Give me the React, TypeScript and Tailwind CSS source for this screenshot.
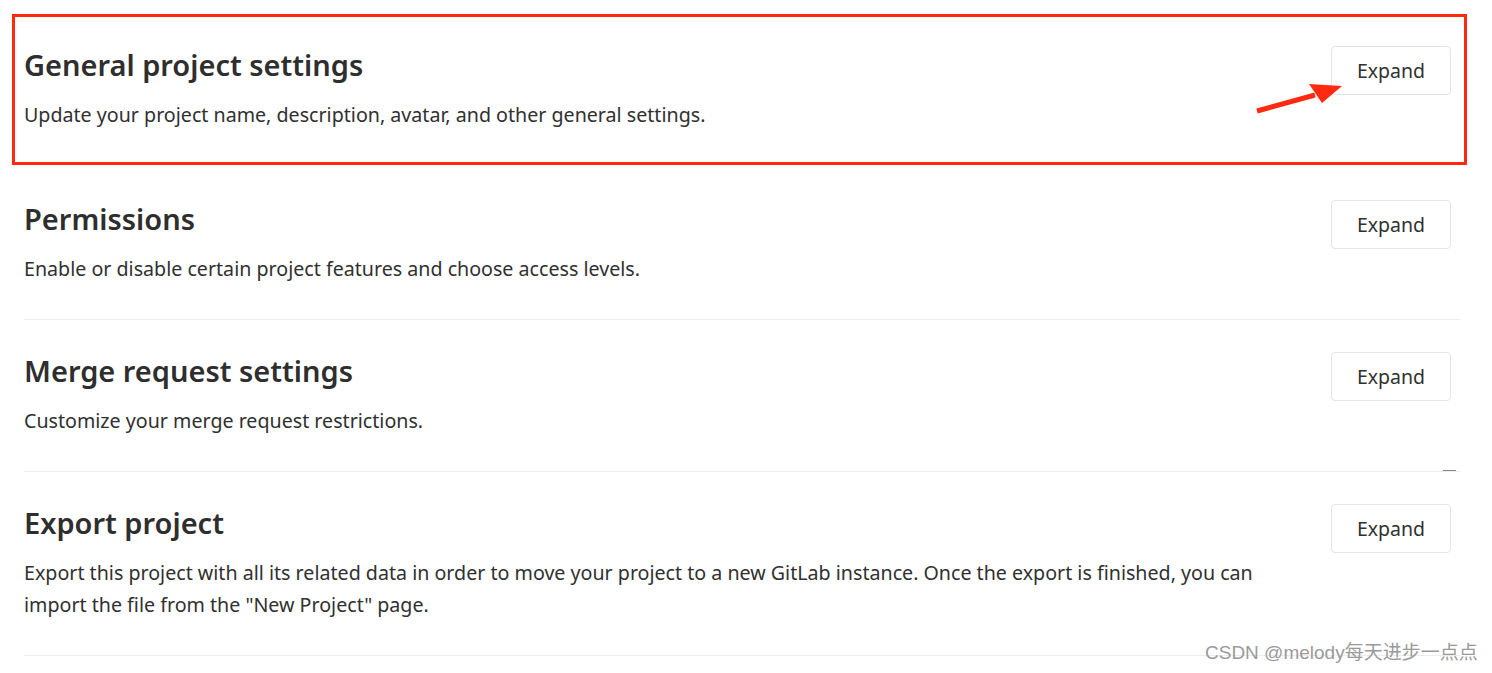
import React from 'react';

type Section = {
  title: string;
  description: string;
};

const SECTIONS: Section[] = [
  {
    title: 'General project settings',
    description: 'Update your project name, description, avatar, and other general settings.',
  },
  {
    title: 'Permissions',
    description: 'Enable or disable certain project features and choose access levels.',
  },
  {
    title: 'Merge request settings',
    description: 'Customize your merge request restrictions.',
  },
  {
    title: 'Export project',
    description:
      'Export this project with all its related data in order to move your project to a new GitLab instance. Once the export is finished, you can import the file from the "New Project" page.',
  },
];

function SettingsSection({ section, divider }: { section: Section; divider: boolean }) {
  return (
    <section
      className={`flex items-start justify-between pt-[32px] pb-[34px] first:pb-[36px] border-b ${
        divider ? 'border-[#ececec]' : 'border-transparent'
      }`}
    >
      <div className="max-w-[1245px]">
        <h4 className="text-[29px] font-semibold leading-[38px] text-[#2e2e2e]">{section.title}</h4>
        <p className="mt-[15px] text-[19.65px] leading-[32px] text-[#303030]">{section.description}</p>
      </div>
      <button
        type="button"
        className="mr-[9px] h-[49px] w-[120px] shrink-0 rounded-[4px] border border-[#e5e5e5] bg-white text-[19.5px] text-[#303030]"
      >
        Expand
      </button>
    </section>
  );
}

export default function App() {
  return (
    <div
      className="relative h-[673px] w-[1492px] overflow-hidden bg-white"
      style={{ fontFamily: '"Noto Sans", "Open Sans", sans-serif' }}
    >
      <div className="ml-6 mr-8 pt-[14px]">
        {SECTIONS.map((s, i) => (
          <SettingsSection key={s.title} section={s} divider={i > 0} />
        ))}
      </div>

      {/* 标注：红框 + 箭头 */}
      <div className="pointer-events-none absolute left-[12px] top-[14px] h-[151px] w-[1455px] border-[3px] border-[#ff2a10]" />
      <svg className="pointer-events-none absolute left-0 top-0" width="1492" height="673">
        <line x1="1257" y1="111" x2="1315" y2="95" stroke="#ff2a10" strokeWidth="5" />
        <polygon points="1342,86 1309,84 1322,103" fill="#ff2a10" />
      </svg>

      {/* 小横杠 */}
      <div className="absolute left-[1443px] top-[470px] h-[1px] w-[13px] bg-[#888]" />

      {/* 水印 */}
      <div
        className="absolute left-[1205px] top-[641px] text-[19px] leading-[24px] text-[#9a9a9a]"
        style={{ fontFamily: '"Liberation Sans", "Noto Sans CJK SC", sans-serif' }}
      >
        CSDN @melody每天进步一点点
      </div>
    </div>
  );
}
